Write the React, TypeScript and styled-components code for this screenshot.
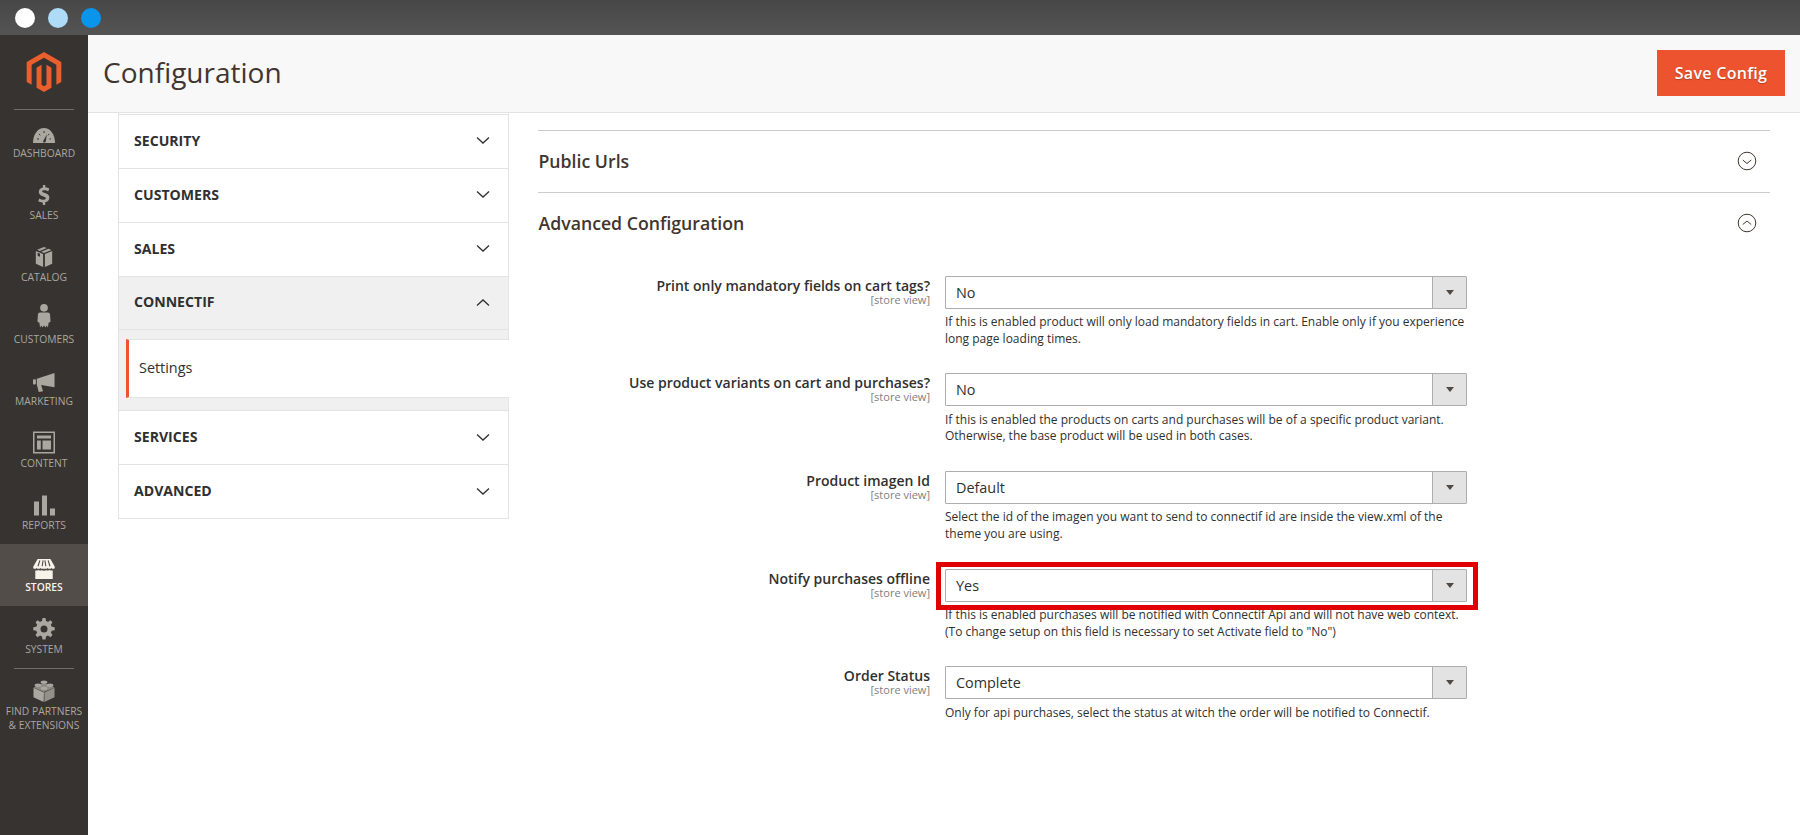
import React, {FC, ReactNode} from "react";
import styled, {createGlobalStyle} from "styled-components";

const GlobalStyle = createGlobalStyle`
  html, body {
    margin: 0;
    padding: 0;
    background: #fff;
    font-family: "Open Sans", "Liberation Sans", sans-serif;
    color: #303030;
  }
  * { box-sizing: border-box; }
`

const Page = styled.div`
  width: 1800px;
  height: 835px;
  display: flex;
  flex-direction: column;
  overflow: hidden;
`

const WindowBar = styled.div`
  height: 35px;
  flex: none;
  display: flex;
  align-items: center;
  gap: 13px;
  padding-left: 15px;
  background: linear-gradient(#474747, #545454);
`

const Dot = styled.span<{$color: string}>`
  width: 20px;
  height: 20px;
  border-radius: 50%;
  background: ${({$color})=>$color};
`

const Shell = styled.div`
  flex: 1;
  display: flex;
  min-height: 0;
`

const Sidebar = styled.nav`
  width: 88px;
  flex: none;
  background: #373330;
`

const LogoBox = styled.div`
  height: 75px;
  margin: 0 14px;
  display: flex;
  justify-content: center;
  padding-top: 17px;
  border-bottom: 1px solid #736d67;
  svg { width: 40px; height: 40px; flex: none; }
`

const NavItem = styled.div<{$active?: boolean}>`
  height: 62px;
  padding-top: 14px;
  display: flex;
  flex-direction: column;
  align-items: center;
  background: ${({$active})=>$active ? "#524d49" : "transparent"};
  color: ${({$active})=>$active ? "#f7f3eb" : "#aaa6a0"};
  svg { height: 22px; width: 26px; flex: none; overflow: visible; }
`

const NavLabel = styled.span<{$active?: boolean}>`
  font-size: 10.3px;
  line-height: 14px;
  font-weight: ${({$active})=>$active ? 600 : 400};
  white-space: nowrap;
`

const NavRule = styled.div`
  margin: 0 14px;
  height: 1px;
  background: #736d67;
`

const PartnerItem = styled(NavItem)`
  height: auto;
  padding-top: 11px;
`

const PartnerLabel = styled(NavLabel)`
  margin-top: 2px;
  text-align: center;
`

const Main = styled.main`
  flex: 1;
  min-width: 0;
  display: flex;
  flex-direction: column;
`

const Header = styled.header`
  height: 78px;
  flex: none;
  display: flex;
  align-items: center;
  justify-content: space-between;
  padding: 0 15px 2px 15px;
  background: #f8f8f8;
  border-bottom: 1px solid #e3e3e3;
`

const Title = styled.h1`
  margin: 0 0 2px;
  font-size: 28px;
  font-weight: 400;
  color: #41362f;
`

const SaveButton = styled.button`
  width: 128px;
  height: 46px;
  border: none;
  background: #ec532e;
  color: #fff;
  font: 600 16px "Open Sans", sans-serif;
  letter-spacing: .3px;
  text-shadow: 0 1px 1px rgba(0,0,0,.25);
`

const Content = styled.div`
  flex: 1;
  display: flex;
  padding: 0 30px;
  gap: 29px;
`

const Tabs = styled.aside`
  width: 391px;
  flex: none;
  align-self: flex-start;
  padding-top: 1px;
  border: solid #e3e3e3;
  border-width: 0 1px 1px 1px;
`

const TabRow = styled.div<{$open?: boolean}>`
  height: 53.85px;
  padding: 0 18px 2px 15px;
  display: flex;
  align-items: center;
  justify-content: space-between;
  border-top: 1px solid #e3e3e3;
  background: ${({$open})=>$open ? "#f0f0f0" : "#fff"};
  font-size: 14.1px;
  font-weight: 700;
  color: #303030;
  svg { width: 14px; height: 9px; flex: none; margin-top: 1px; }
`

const TabChildren = styled.div`
  height: 81px;
  padding: 9px 0 12px 7px;
  border-top: 1px solid #e3e3e3;
  background: #f0f0f0;
`

const TabLink = styled.div`
  height: 59px;
  display: flex;
  align-items: center;
  padding: 0 0 3px 10px;
  margin-right: -1px;
  background: #fff;
  border-left: 3px solid #ec532e;
  border-top: 1px solid #e3e3e3;
  border-bottom: 1px solid #e3e3e3;
  font-size: 14.4px;
`

const Form = styled.section`
  flex: 1;
  min-width: 0;
  padding-top: 17px;
`

const Section = styled.div`
  height: 62px;
  padding: 0 13px 2px 0.5px;
  display: flex;
  align-items: center;
  justify-content: space-between;
  border-top: 1px solid #ccc;
  font-size: 17.7px;
  font-weight: 600;
  color: #41362f;
  svg { width: 20px; height: 20px; flex: none; }
`

const Fields = styled.div`
  padding-top: 21.7px;
`

const Field = styled.div`
  display: grid;
  grid-template-columns: 392px 522px;
  column-gap: 15px;
  margin-bottom: 25.9px;
`

const LabelBox = styled.div`
  text-align: right;
`

const LabelTitle = styled.div`
  font-size: 14px;
  line-height: 20px;
  font-weight: 600;
`

const Scope = styled.div`
  font-size: 11px;
  line-height: 8px;
  color: #808080;
`

const Control = styled.div`
  position: relative;
`

const Select = styled.div`
  height: 33px;
  display: flex;
  align-items: stretch;
  justify-content: space-between;
  border: 1px solid #adadad;
  border-radius: 1px;
  font-size: 14.4px;
`

const SelectValue = styled.span`
  align-self: center;
  padding-left: 10px;
`

const Arrow = styled.span`
  width: 34px;
  display: flex;
  align-items: center;
  justify-content: center;
  background: #e3e3e3;
  border-left: 1px solid #adadad;
  &::after {
    content: "";
    border: solid transparent;
    border-width: 5px 4px 0 4px;
    border-top-color: #514943;
  }
`

const Note = styled.p`
  margin: 5.4px 0 0;
  min-height: 33.4px;
  font-size: 12px;
  line-height: 16.7px;
  color: #303030;
  white-space: nowrap;
`

const Highlight = styled.div`
  position: absolute;
  left: -9px;
  top: -7px;
  width: 542px;
  height: 48px;
  border: 5px solid #e00000;
  pointer-events: none;
`

const Svg:FC<{box:string, children:ReactNode}> = ({box, children})=>(
  <svg viewBox={box} fill="currentColor" aria-hidden="true">{children}</svg>
)

const MagentoLogo = ()=>(
  <svg viewBox="0 0 24 24" fill="#eb5f2e" aria-hidden="true">
    <path d="M12 24l-4.455-2.572v-12l2.97-1.715v12.001L12 20.57l1.485-.856V7.714l2.97 1.715v12L12 24zM22.391 6v12l-2.969 1.714V7.714L12 3.429 4.574 7.714v12L1.609 18V6L12 0l10.391 6z"/>
  </svg>
)

const icons: Record<string, ReactNode> = {
  dashboard: (
    <Svg box="0 0 26 22">
      <path d="M2 19c0-9 5-15 11-15s11 6 11 15z"/>
      <path d="M13.8 18.5c-1.2.4-2-.6-1.6-1.6l3.6-6.4-1 7z" fill="#373330"/>
      <path d="M6 15h2M8 10l1.3 1.3M13 7v2M18 10l-1 1.3M18.5 15H20" stroke="#373330" strokeWidth="1"/>
    </Svg>
  ),
  sales: (
    <Svg box="-1.3 1.1 28.6 24.2">
      <path d="M11.8 0h2.600v2.500c1.900.2 3.400.7 4.400 1.300l-1.100 3.200c-1.200-.6-2.700-1.200-4.500-1.200-1.500 0-2.200.5-2.200 1.200 0 .8.9 1.200 3 1.900 3.300 1.100 4.900 2.600 4.900 5.100 0 2.500-1.700 4.400-4.600 4.900V22h-2.600v-2.600c-2-.1-3.900-.7-5-1.400l1.100-3.200c1.300.7 3 1.400 4.800 1.400 1.500 0 2.500-.6 2.500-1.500s-.8-1.400-2.800-2.100c-3-1-5-2.400-5-5 0-2.400 1.700-4.300 4.500-4.800z"/>
    </Svg>
  ),
  catalog: (
    <Svg box="-1.3 1.1 28.6 24.2">
      <path d="M13 0l3 1.200-7.600 3.100-3-1.200zM18 2l3.200 1.300L13 6.500 9.900 5.200zM4 4.400l8 3.200V22l-8-3.600zM14 7.600l8-3.200v14L14 22z"/>
      <path d="M6 6.400l2.600 1v3.200L6 9.600z" fill="#373330"/>
    </Svg>
  ),
  customers: (
    <Svg box="0.85 5.6 24.3 20.5">
      <circle cx="13" cy="3.500" r="3.600"/>
      <path d="M9.500 8h7c1.400 0 2.100.8 2.200 2l.4 6.500-1.800 1-.6 4.500-1.200-2-1 2-1.500-2-1.500 2-1-2-1.200 2-.6-4.500-1.800-1 .4-6.500C7.400 8.800 8.100 8 9.500 8z"/>
    </Svg>
  ),
  marketing: (
    <Svg box="0.5 0 25 23">
      <path d="M24 1v15L10 13.500l2 6.500-4.500 1-2-8V7z"/>
      <rect x="1.500" y="7.500" width="3" height="5.500" rx="1"/>
    </Svg>
  ),
  content: (
    <Svg box="0 2.500 26 22">
      <path fillRule="evenodd" d="M2 0h22v22H2zM3.500 1.500v19h19v-19z"/>
      <path d="M6 4h14v3H6zM6 9h3.800v9H6zM11.500 9H20v9h-8.500z"/>
    </Svg>
  ),
  reports: (
    <Svg box="0 1.500 26 22">
      <path d="M3 7h5v14H3zM11 1h5v20h-5zM19 14h5v7h-5z"/>
    </Svg>
  ),
  stores: (
    <Svg box="0 -1 26 24">
      <path d="M6 0h14l4.500 8c.6 1.200.4 2.500-.9 2.800-1 .2-2-.3-2.500-1-.5.7-1.300 1-2.200 1-.9 0-1.600-.4-2-1-.5.6-1.200 1-2 1H11.100c-.8 0-1.500-.4-2-1-.4.6-1.100 1-2 1-.9 0-1.700-.3-2.200-1-.5.7-1.500 1.200-2.500 1C1.100 10.500.9 9.200 1.500 8z"/>
      <path d="M8.500 1.500L6.500 8M12 1.500L11 8M14 1.500L15 8M17.500 1.500L19.500 8" stroke="#524d49" strokeWidth="1.200"/>
      <path d="M3.500 12.500c1.200.2 2.300 0 3.500-.5 1.100.7 2.400.9 3.500.3 1.500.7 3.500.7 5 0 1.100.6 2.400.4 3.500-.3 1.200.5 2.300.7 3.500.5V22h-19z"/>
    </Svg>
  ),
  system: (
    <Svg box="0 2 26 22">
      <path fillRule="evenodd" d="M11.500 0h3l.5 3c.7.2 1.300.5 1.900.9l2.500-1.700 2.100 2.100-1.700 2.500c.4.600.7 1.200.9 1.900l3 .5v3l-3 .5c-.2.700-.5 1.300-.9 1.900l1.700 2.500-2.100 2.100-2.500-1.700c-.6.400-1.200.7-1.900.9l-.5 3h-3l-.5-3c-.7-.2-1.300-.5-1.900-.9l-2.500 1.700-2.100-2.100 1.700-2.500c-.4-.6-.7-1.200-.9-1.900l-3-.5v-3l3-.5c.2-.7.5-1.300.9-1.900L4.500 4.300l2.100-2.100 2.500 1.700c.6-.4 1.200-.7 1.900-.9zM13 7.500a3.500 3.500 0 100 7 3.500 3.500 0 000-7z"/>
    </Svg>
  ),
  partners: (
    <Svg box="0 0 26 22">
      <path d="M13 12.400L2.500 7.800v9.400L12.600 22z"/>
      <path d="M13.400 12.400V22l10.100-4.800V7.800z" opacity=".8"/>
      <path d="M2.500 7.500L13 3l10.500 4.500L13 12z" opacity=".75"/>
      <ellipse cx="13" cy="2.200" rx="3.400" ry="1.700"/>
      <ellipse cx="7" cy="5.300" rx="3.400" ry="1.700"/>
      <ellipse cx="19" cy="5.300" rx="3.400" ry="1.700"/>
      <ellipse cx="13" cy="8.300" rx="3.400" ry="1.700"/>
    </Svg>
  ),
}

const navItems = [
  {id: "dashboard", label: "DASHBOARD"},
  {id: "sales", label: "SALES"},
  {id: "catalog", label: "CATALOG"},
  {id: "customers", label: "CUSTOMERS"},
  {id: "marketing", label: "MARKETING"},
  {id: "content", label: "CONTENT"},
  {id: "reports", label: "REPORTS"},
  {id: "stores", label: "STORES", active: true},
  {id: "system", label: "SYSTEM"},
]

const fields = [
  {
    label: "Print only mandatory fields on cart tags?",
    value: "No",
    note: ["If this is enabled product will only load mandatory fields in cart. Enable only if you experience", "long page loading times."],
  },
  {
    label: "Use product variants on cart and purchases?",
    value: "No",
    note: ["If this is enabled the products on carts and purchases will be of a specific product variant.", "Otherwise, the base product will be used in both cases."],
  },
  {
    label: "Product imagen Id",
    value: "Default",
    note: ["Select the id of the imagen you want to send to connectif id are inside the view.xml of the", "theme you are using."],
  },
  {
    label: "Notify purchases offline",
    value: "Yes",
    marked: true,
    note: ["If this is enabled purchases will be notified with Connectif Api and will not have web context.", "(To change setup on this field is necessary to set Activate field to \"No\")"],
  },
  {
    label: "Order Status",
    value: "Complete",
    note: ["Only for api purchases, select the status at witch the order will be notified to Connectif."],
  },
]

const Chevron:FC<{up?: boolean}> = ({up})=>(
  <svg viewBox="0 0 14 9" fill="none" stroke="#303030" strokeWidth="1.300" aria-hidden="true">
    <path d={up ? "M1 7.500l6-5.500 6 5.500" : "M1 1.500l6 5.500 6-5.500"}/>
  </svg>
)

const CircleChevron:FC<{up?: boolean}> = ({up})=>(
  <svg viewBox="0 0 20 20" fill="none" stroke="#41362f" strokeWidth="1" aria-hidden="true">
    <circle cx="10" cy="10" r="8.800"/>
    <path d={up ? "M5.800 11.500L10 8l4.200 3.500" : "M5.800 9L10 12.500 14.200 9"}/>
  </svg>
)

const App = ()=>(
  <Page>
    <GlobalStyle/>
    <WindowBar>
      <Dot $color="#ffffff"/>
      <Dot $color="#aedcf8"/>
      <Dot $color="#0a95ec"/>
    </WindowBar>
    <Shell>
      <Sidebar>
        <LogoBox><MagentoLogo/></LogoBox>
        {navItems.map(({id, label, active})=>(
          <NavItem key={id} $active={active}>
            {icons[id]}
            <NavLabel $active={active}>{label}</NavLabel>
          </NavItem>
        ))}
        <NavRule/>
        <PartnerItem>
          {icons.partners}
          <PartnerLabel>FIND PARTNERS<br/>&amp; EXTENSIONS</PartnerLabel>
        </PartnerItem>
      </Sidebar>
      <Main>
        <Header>
          <Title>Configuration</Title>
          <SaveButton>Save Config</SaveButton>
        </Header>
        <Content>
          <Tabs>
            <TabRow>SECURITY<Chevron/></TabRow>
            <TabRow>CUSTOMERS<Chevron/></TabRow>
            <TabRow>SALES<Chevron/></TabRow>
            <TabRow $open>CONNECTIF<Chevron up/></TabRow>
            <TabChildren>
              <TabLink>Settings</TabLink>
            </TabChildren>
            <TabRow>SERVICES<Chevron/></TabRow>
            <TabRow>ADVANCED<Chevron/></TabRow>
          </Tabs>
          <Form>
            <Section>Public Urls<CircleChevron/></Section>
            <Section>Advanced Configuration<CircleChevron up/></Section>
            <Fields>
              {fields.map(({label, value, note, marked})=>(
                <Field key={label}>
                  <LabelBox>
                    <LabelTitle>{label}</LabelTitle>
                    <Scope>[store view]</Scope>
                  </LabelBox>
                  <Control>
                    <Select>
                      <SelectValue>{value}</SelectValue>
                      <Arrow/>
                    </Select>
                    {marked && <Highlight/>}
                    <Note>{note.map((line)=><div key={line}>{line}</div>)}</Note>
                  </Control>
                </Field>
              ))}
            </Fields>
          </Form>
        </Content>
      </Main>
    </Shell>
  </Page>
)

export default App
